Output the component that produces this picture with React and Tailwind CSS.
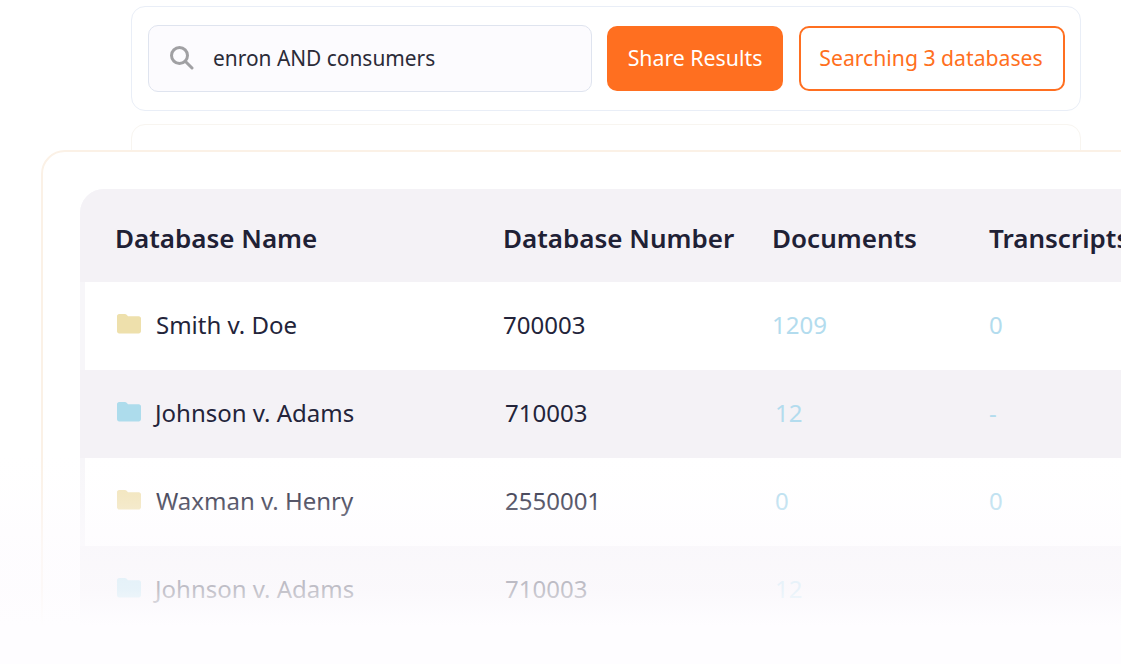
import React from "react";

const font = { fontFamily: '"Noto Sans", sans-serif' };

function Folder({ color }) {
  return (
    <svg width="24" height="20" viewBox="0 0 24 20" className="shrink-0 mb-[3px]">
      <path d="M0 2.2C0 1 .9 0 2.2 0h5.6c.9 0 1.6.4 2.1 1l1.1 1.3h10.8c1.2 0 2.2 1 2.2 2.2v12.8c0 1.2-1 2.2-2.2 2.2H2.2C.9 19.5 0 18.5 0 17.3z" fill={color} />
    </svg>
  );
}

function Row({ inset, folder, name, num, numX, docs, docsX, trans }) {
  return (
    <div className={`h-[88px] pb-[2px] flex items-center ${inset ? "ml-[5px] bg-white" : "bg-[#f4f2f6]"}`}>
      <div className={`${inset ? "w-[413px] pl-[32px]" : "w-[418px] pl-[37px]"} flex items-center`}>
        {folder}
        <span className={`${inset ? "ml-[15px]" : "ml-[14px]"} text-[24px] leading-[32px] text-[#23243a]`}>{name}</span>
      </div>
      <div className={`${numX} text-[24px] leading-[32px] text-[#23243a]`}>{num}</div>
      <div className={`${docsX} text-[24px] leading-[32px] text-[#b3dcee]`}>{docs}</div>
      <div className="text-[24px] leading-[32px] text-[#b3dcee]">{trans}</div>
    </div>
  );
}

export default function App() {
  return (
    <div className="relative w-[1121px] h-[664px] overflow-hidden bg-white" style={font}>
      <div className="ml-[131px] mt-[6px] w-[950px] h-[105px] rounded-[14px] border-[1.5px] border-[#e9eef7] bg-white flex items-center gap-[15px] pl-[16px]">
        <div className="w-[444px] h-[67px] pb-[2px] rounded-[10px] border-[1.5px] border-[#dfe4ef] bg-[#fcfbfe] flex items-center pl-[20px]">
          <svg width="25" height="25" viewBox="0 0 25 25" fill="none" stroke="#a0a0a3" strokeWidth="3" strokeLinecap="round">
            <circle cx="10.5" cy="10.5" r="8" />
            <path d="M16.5 16.5L23 23" />
          </svg>
          <span className="ml-[19px] text-[20.9px] leading-[30px] text-[#2b2b38]">enron AND consumers</span>
        </div>
        <div className="w-[176px] h-[65px] pb-[2px] rounded-[10px] bg-[#ff6f20] flex items-center justify-center text-white text-[21.3px]">Share Results</div>
        <div className="ml-px w-[266px] h-[65px] pr-[2px] pb-[2px] rounded-[10px] border-2 border-[#ff6f20] bg-white flex items-center justify-center text-[#ff6f20] text-[21.2px]">Searching 3 databases</div>
      </div>

      <div className="ml-[131px] mt-[13px] w-[950px] h-[60px] rounded-[14px] border border-[#f8f5f0] bg-white" />

      <div className="relative -mt-[34px] ml-[41px] w-[1200px] h-[560px] rounded-tl-[24px] border-2 border-[#fbf1e6] bg-white pl-[37px] pt-[37px]">
        <div className="w-[1100px] bg-[#f7f6f9] rounded-tl-[24px]">
          <div className="h-[93px] pt-[6px] rounded-tl-[24px] bg-[#f4f2f6] flex items-center text-[26px] font-semibold text-[#1f2135]">
            <div className="w-[423px] pl-[35px]">Database Name</div>
            <div className="w-[269px]">Database Number</div>
            <div className="w-[217px]">Documents</div>
            <div>Transcripts</div>
          </div>
          <Row inset folder={<Folder color="#eee0ac" />} name="Smith v. Doe" num="700003" numX="w-[274px] pl-[5px]" docs="1209" docsX="w-[217px]" trans="0" />
          <Row folder={<Folder color="#addcec" />} name="Johnson v. Adams" num="710003" numX="w-[274px] pl-[7px]" docs="12" docsX="w-[217px] pl-[3px]" trans="-" />
          <Row inset folder={<Folder color="#f1e3b6" />} name="Waxman v. Henry" num="2550001" numX="w-[274px] pl-[7px]" docs="0" docsX="w-[217px] pl-[3px]" trans="0" />
          <Row folder={<Folder color="#addcec" />} name="Johnson v. Adams" num="710003" numX="w-[274px] pl-[7px]" docs="12" docsX="w-[217px] pl-[3px]" trans="" />
        </div>
      </div>

      <div className="absolute left-0 right-0 top-[455px] h-[209px] bg-[linear-gradient(to_bottom,rgba(253,251,254,0)_0%,rgba(253,251,254,0.2)_20%,rgba(253,251,254,0.62)_44%,rgba(253,251,254,0.72)_64%,rgba(254,253,255,1)_82%)]" />
    </div>
  );
}
